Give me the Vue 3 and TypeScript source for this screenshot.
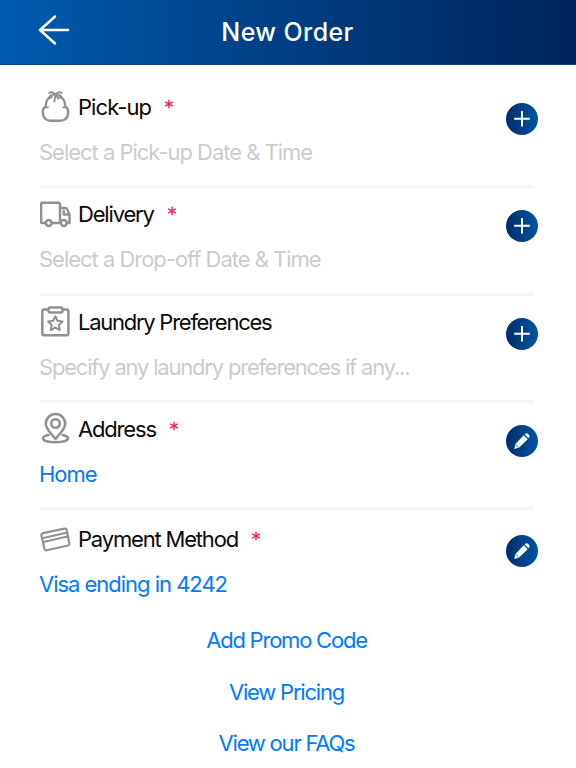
<script setup lang="ts">
type IconName = 'bag' | 'truck' | 'clipboard' | 'pin' | 'card'

interface OrderRow {
  key: IconName
  title: string
  detail: string
  required: boolean
  filled: boolean
}

const rows: OrderRow[] = [
  { key: 'bag', title: 'Pick-up', detail: 'Select a Pick-up Date & Time', required: true, filled: false },
  { key: 'truck', title: 'Delivery', detail: 'Select a Drop-off Date & Time', required: true, filled: false },
  { key: 'clipboard', title: 'Laundry Preferences', detail: 'Specify any laundry preferences if any...', required: false, filled: false },
  { key: 'pin', title: 'Address', detail: 'Home', required: true, filled: true },
  { key: 'card', title: 'Payment Method', detail: 'Visa ending in 4242', required: true, filled: true },
]

const links = [
  { key: 'promo', label: 'Add Promo Code' },
  { key: 'pricing', label: 'View Pricing' },
  { key: 'faq', label: 'View our FAQs' },
]
</script>

<template>
  <div class="screen">
    <header class="bar">
      <button class="back" aria-label="Back">
        <svg width="32" height="32" viewBox="0 0 32 32"><path d="M17 2.500 2 16l15 13.500M2 16h28" /></svg>
      </button>
      <h1>New Order</h1>
    </header>

    <main>
      <section v-for="row in rows" :key="row.key" class="row" :class="row.key">
        <div class="text">
          <div class="title">
            <svg class="icon" width="32" height="34" viewBox="0 0 32 34">
              <g v-if="row.key === 'bag'">
                <path d="M11.500 7C8.500 7.500 6 10.500 6 14.500Q6 16.200 5 17C3.500 18 2.800 19.500 2.800 22C2.800 25 3.800 27.500 5.500 29Q7.300 30.700 10.500 30.700H20.500Q23.700 30.700 25.500 29C27.200 27.500 28.200 25 28.200 22C28.200 19.500 27.500 18 26 17Q25 16.200 25 14.500C25 10.500 22.500 7.500 19.500 7" stroke-width="2.400" />
                <path d="M5.500 17.300H8M25.500 17.300H23" stroke-width="1.700" />
                <path d="M15.500 4.600C13.500 1.800 11.500 1.800 9.300 2.900M15.500 4.600C17.500 1.800 19.500 1.800 21.700 2.900M15.500 4.800C12.500 4.300 10.500 5 9.500 6.700M15.500 4.800C18.500 4.300 20.500 5 21.500 6.700M15.300 5 14.400 11.500M16.500 5.500 18 8.700" stroke-width="1.900" />
              </g>
              <g v-else-if="row.key === 'truck'" stroke-width="2.500">
                <path d="M5 26H2.200Q1.100 26 1.100 24.800V7.100Q1.100 5.800 2.400 5.800H18.500Q20 5.800 20 7.200V26H12.200" />
                <path d="M20 11H25.200Q26.700 11 27.200 12.300L29.500 17.800V26H27.500M23.800 14V17.500H29" />
                <circle cx="8.700" cy="26" r="2.900" /><circle cx="23.800" cy="26" r="2.900" />
              </g>
              <g v-else-if="row.key === 'clipboard'" stroke-width="2.500">
                <path d="M8 4.500H4.200Q2.300 4.500 2.300 6.400V28.200Q2.300 30.200 4.200 30.200H26.500Q28.400 30.200 28.400 28.200V6.400Q28.400 4.500 26.500 4.500H23" />
                <rect x="8.500" y="2.500" width="14" height="5" rx="1.800" />
                <path d="m15.300 11.200 2.200 4.600 5 .7-3.600 3.500.9 5-4.500-2.400-4.500 2.400.9-5-3.600-3.500 5-.7z" stroke-width="2" />
              </g>
              <g v-else-if="row.key === 'pin'" stroke-width="2.500">
                <path d="M15.500 27C11 21.200 5.800 17.200 5.800 11.700A9.700 9.700 0 0 1 25.200 11.700C25.200 17.200 20 21.200 15.500 27Z" />
                <circle cx="15.500" cy="11.500" r="4.300" />
                <path d="M8.500 23C5 23.700 3 24.700 3 26.300C3 28.700 8 30.200 15.500 30.200S28 28.700 28 26.300C28 24.700 26 23.700 22.500 23" />
              </g>
              <g v-else stroke-width="2.200">
                <path d="M3 11.200 24.500 6.600Q26.200 6.300 26.600 7.800L29.300 21.300Q29.700 23 28 23.500L6.800 28.300Q5 28.700 4.500 27L1.400 13.500Q1 11.700 3 11.200ZM2.300 16.200 27.400 10.500M3.500 20 28.200 14.300" />
              </g>
            </svg>
            <h2>{{ row.title }}</h2>
            <svg v-if="row.required" class="star" width="10" height="10" viewBox="0 0 10 10"><path d="M5 .8v8.400M1.200 2.900l7.600 4.200M8.800 2.900 1.200 7.100" /></svg>
          </div>
          <p :class="{ filled: row.filled }">{{ row.detail }}</p>
        </div>
        <button class="action" :aria-label="row.filled ? 'Edit' : 'Add'">
          <svg width="32" height="32" viewBox="0 0 32 32">
            <g v-if="row.filled" fill="#fff">
              <path d="m17.700 10.300 4 4-8.500 8.200-5 1.500 1.400-5.200z" />
              <path d="m18.600 9.400 1-.8q1.200-.8 2.300.1l1.300 1.300q.9 1.100 0 2.300l-.7.900z" />
              <path d="m9.900 19.500 2.700 2.700" stroke="#003c83" stroke-width=".8" />
            </g>
            <path v-else d="M16 8v15.500M8.200 15.800h15.600" class="plus" />
          </svg>
        </button>
      </section>

      <nav>
        <a v-for="link in links" :key="link.key" :class="link.key">{{ link.label }}</a>
      </nav>
    </main>
  </div>
</template>

<style>
body {
  margin: 0;
  background: #fff;
}
</style>

<style scoped>
.screen {
  box-sizing: border-box;
  width: 576px;
  height: 768px;
  overflow: hidden;
  background: #fff;
  color: #0a0a0a;
  font-family: Inter, "Liberation Sans", sans-serif;
}
button {
  padding: 0;
  border: 0;
  background: none;
}
svg {
  display: block;
  flex: none;
  fill: none;
}
h1, h2, p {
  margin: 0;
  font-weight: 400;
  white-space: nowrap;
}
.bar {
  box-sizing: border-box;
  height: 65px;
  display: grid;
  grid-template-columns: 80px 1fr 80px;
  align-items: center;
  background: linear-gradient(90deg, #005baf 0%, #003e82 50%, #00245c 100%);
  border-bottom: 1px solid #17407f;
}
.back {
  padding: 0 0 4px 38px;
}
.back path {
  stroke: #fff;
  stroke-width: 2.5;
  stroke-linecap: round;
  stroke-linejoin: round;
}
h1 {
  padding-right: 1px;
  color: #fff;
  font-size: 25px;
  font-weight: 500;
  line-height: 30px;
  letter-spacing: 0.4px;
  text-align: center;
}
main {
  padding: 16px 38px 0 40px;
}
.row {
  box-sizing: border-box;
  height: 107.3px;
  display: flex;
  justify-content: space-between;
  background: linear-gradient(#f6f6f6, #f6f6f6) left bottom / 494px 3px no-repeat;
}
.row.card {
  height: 105px;
  padding-top: 3px;
  background: none;
}
.title {
  height: 34px;
  padding-top: 9px;
  display: flex;
  align-items: center;
}
.icon {
  margin-right: 6px;
  stroke: #919191;
  stroke-linecap: round;
  stroke-linejoin: round;
}
h2, p, a {
  font-size: 22px;
  line-height: 28px;
}
h2 {
  letter-spacing: -1.18px;
}
.bag h2 {
  letter-spacing: -0.94px;
}
.clipboard h2 {
  letter-spacing: -1.26px;
}
.star {
  margin: -6px 0 0 13px;
  stroke: #fa1e50;
  stroke-width: 1.4;
}
p {
  margin: 14px 0 0 -1px;
  color: #cbcbcb;
  letter-spacing: -1.02px;
}
.clipboard p {
  letter-spacing: -1.2px;
}
p.filled {
  color: #007aff;
}
.action {
  width: 32px;
  height: 32px;
  margin-top: 22px;
  border-radius: 50%;
  background: linear-gradient(90deg, #002d69, #0055a5);
}
.plus {
  stroke: #fff;
  stroke-width: 2;
}
nav {
  display: flex;
  flex-direction: column;
  align-items: center;
  gap: 23.5px;
  padding: 11px 5px 0 0;
}
a {
  color: #007aff;
  letter-spacing: -1.22px;
}
</style>
